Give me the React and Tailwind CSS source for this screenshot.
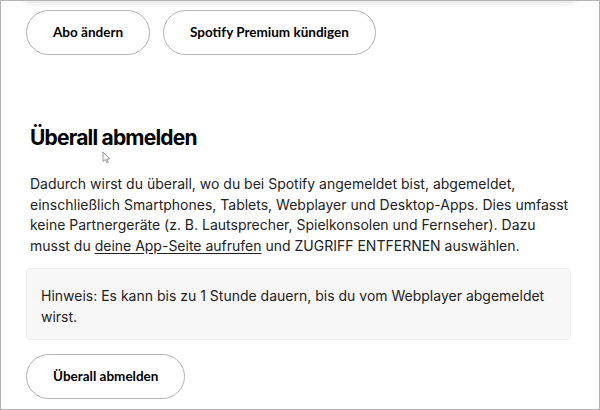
export default function App() {
  return (
    <div
      className="relative h-[410px] w-[600px] overflow-hidden border border-[#b5b5b5] bg-white text-black"
      style={{ fontFamily: 'Inter, "Noto Sans", sans-serif' }}
    >
      <div className="absolute left-6 right-6 -top-2 h-2 shadow-[0_2px_6px_rgba(0,0,0,0.12)]" />
      <div className="px-[25px] pt-[9px]">
        <div className="flex gap-[13px]" style={{ fontFamily: 'Lato, "Noto Sans", sans-serif' }}>
          <button className="h-[45px] rounded-full border border-[#b3b3b3] px-[26px] text-[13.5px] font-bold">
            Abo ändern
          </button>
          <button className="h-[45px] rounded-full border border-[#b3b3b3] px-[26px] text-[13.5px] font-bold">
            Spotify Premium kündigen
          </button>
        </div>

        <h2 className="mt-[69px] pl-[4px] text-[21px] font-bold leading-[28px] tracking-[-0.8px]">
          Überall abmelden
        </h2>
        <div className="relative h-[14px]">
          <svg className="absolute left-[76px] top-[-1px]" width="9" height="13" viewBox="0 0 9 13">
            <path d="M1 1 L1 10.5 L3.3 8.5 L5 12 L6.3 11.4 L4.7 8 L7.8 8 Z" fill="#fff" stroke="#8a8a8a" strokeWidth="0.9" />
          </svg>
        </div>

        <p className="mt-[8px] w-[548px] pl-[4px] text-[14px] leading-[20.5px] text-[#222]">
          Dadurch wirst du überall, wo du bei Spotify angemeldet bist, abgemeldet, einschließlich Smartphones,
          Tablets, Webplayer und Desktop-Apps. Dies umfasst keine Partnergeräte (z. B. Lautsprecher,
          Spielkonsolen und Fernseher). Dazu musst du{' '}
          <span className="underline underline-offset-2">deine App-Seite aufrufen</span> und ZUGRIFF ENTFERNEN
          auswählen.
        </p>

        <div className="mt-[12px] w-[545px] rounded-[4px] border border-[#ececec] bg-[#f7f7f7] px-[14px] pb-[12px] pt-[17px] text-[14px] leading-[20.5px] text-[#222]">
          Hinweis: Es kann bis zu 1 Stunde dauern, bis du vom Webplayer abgemeldet wirst.
        </div>

        <button
          className="mt-[14px] h-[45px] rounded-full border border-[#b3b3b3] px-[26px] text-[13.5px] font-bold"
          style={{ fontFamily: 'Lato, "Noto Sans", sans-serif' }}
        >
          Überall abmelden
        </button>
      </div>
    </div>
  )
}
